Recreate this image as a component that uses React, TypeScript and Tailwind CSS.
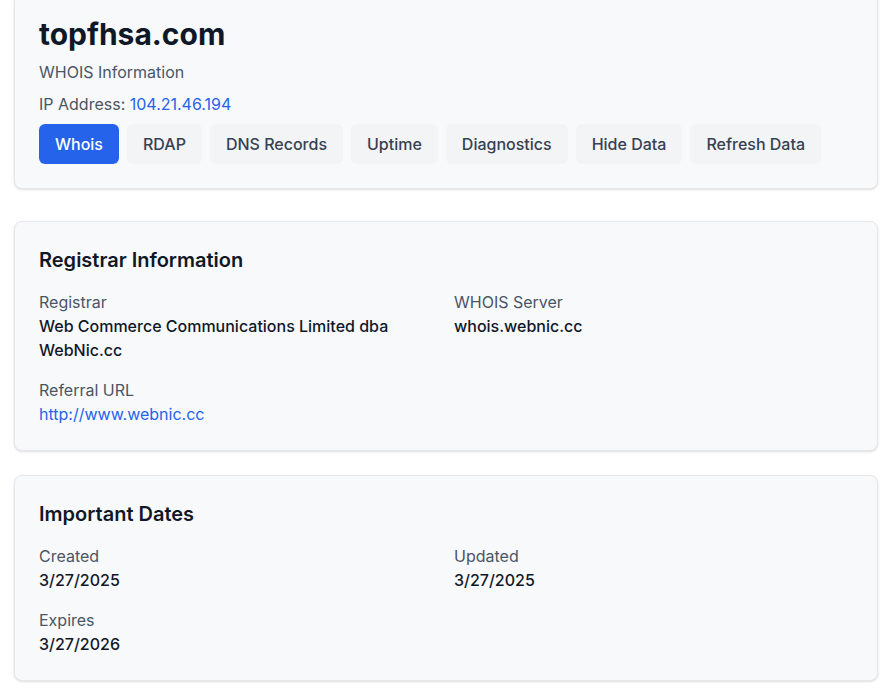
import React from "react";

const buttons = ["Whois", "RDAP", "DNS Records", "Uptime", "Diagnostics", "Hide Data", "Refresh Data"];

function Field({ label, children }: { label: string; children: React.ReactNode }) {
  return (
    <div>
      <div className="text-base text-gray-600">{label}</div>
      <div className="text-base font-medium text-gray-900">{children}</div>
    </div>
  );
}

export default function App() {
  return (
    <div className="min-h-screen bg-white" style={{ fontFamily: "Inter, 'Noto Sans', sans-serif" }}>
      <div className="pl-[14px] pr-[16px] -mt-[9px] pb-4">
        <div className="rounded-lg border border-gray-200 bg-[#f8f9fb] p-6 shadow-sm mb-8">
          <h1 className="text-3xl font-bold text-gray-900 mb-2">topfhsa.com</h1>
          <p className="text-base text-gray-600 mb-2">WHOIS Information</p>
          <p className="text-base text-gray-600 mb-2">
            IP Address: <span className="text-[#2563eb]">104.21.46.194</span>
          </p>
          <div className="flex gap-2">
            {buttons.map((b, i) => (
              <button
                key={b}
                className={
                  i === 0
                    ? "h-10 px-4 rounded-md bg-[#2563eb] text-white text-base font-medium"
                    : "h-10 px-4 rounded-md bg-gray-100 text-gray-700 text-base font-medium"
                }
              >
                {b}
              </button>
            ))}
          </div>
        </div>

        <div className="rounded-lg border border-gray-200 bg-[#f8f9fb] p-6 shadow-sm mb-6">
          <h2 className="text-xl font-semibold text-gray-900 mb-4">Registrar Information</h2>
          <div className="grid grid-cols-2 gap-4">
            <Field label="Registrar">Web Commerce Communications Limited dba WebNic.cc</Field>
            <Field label="WHOIS Server">whois.webnic.cc</Field>
            <div>
              <div className="text-base text-gray-600">Referral URL</div>
              <div className="text-base text-[#2563eb]">http://www.webnic.cc</div>
            </div>
          </div>
        </div>

        <div className="rounded-lg border border-gray-200 bg-[#f8f9fb] p-6 shadow-sm">
          <h2 className="text-xl font-semibold text-gray-900 mb-4">Important Dates</h2>
          <div className="grid grid-cols-2 gap-4">
            <Field label="Created">3/27/2025</Field>
            <Field label="Updated">3/27/2025</Field>
            <Field label="Expires">3/27/2026</Field>
          </div>
        </div>
      </div>
    </div>
  );
}
